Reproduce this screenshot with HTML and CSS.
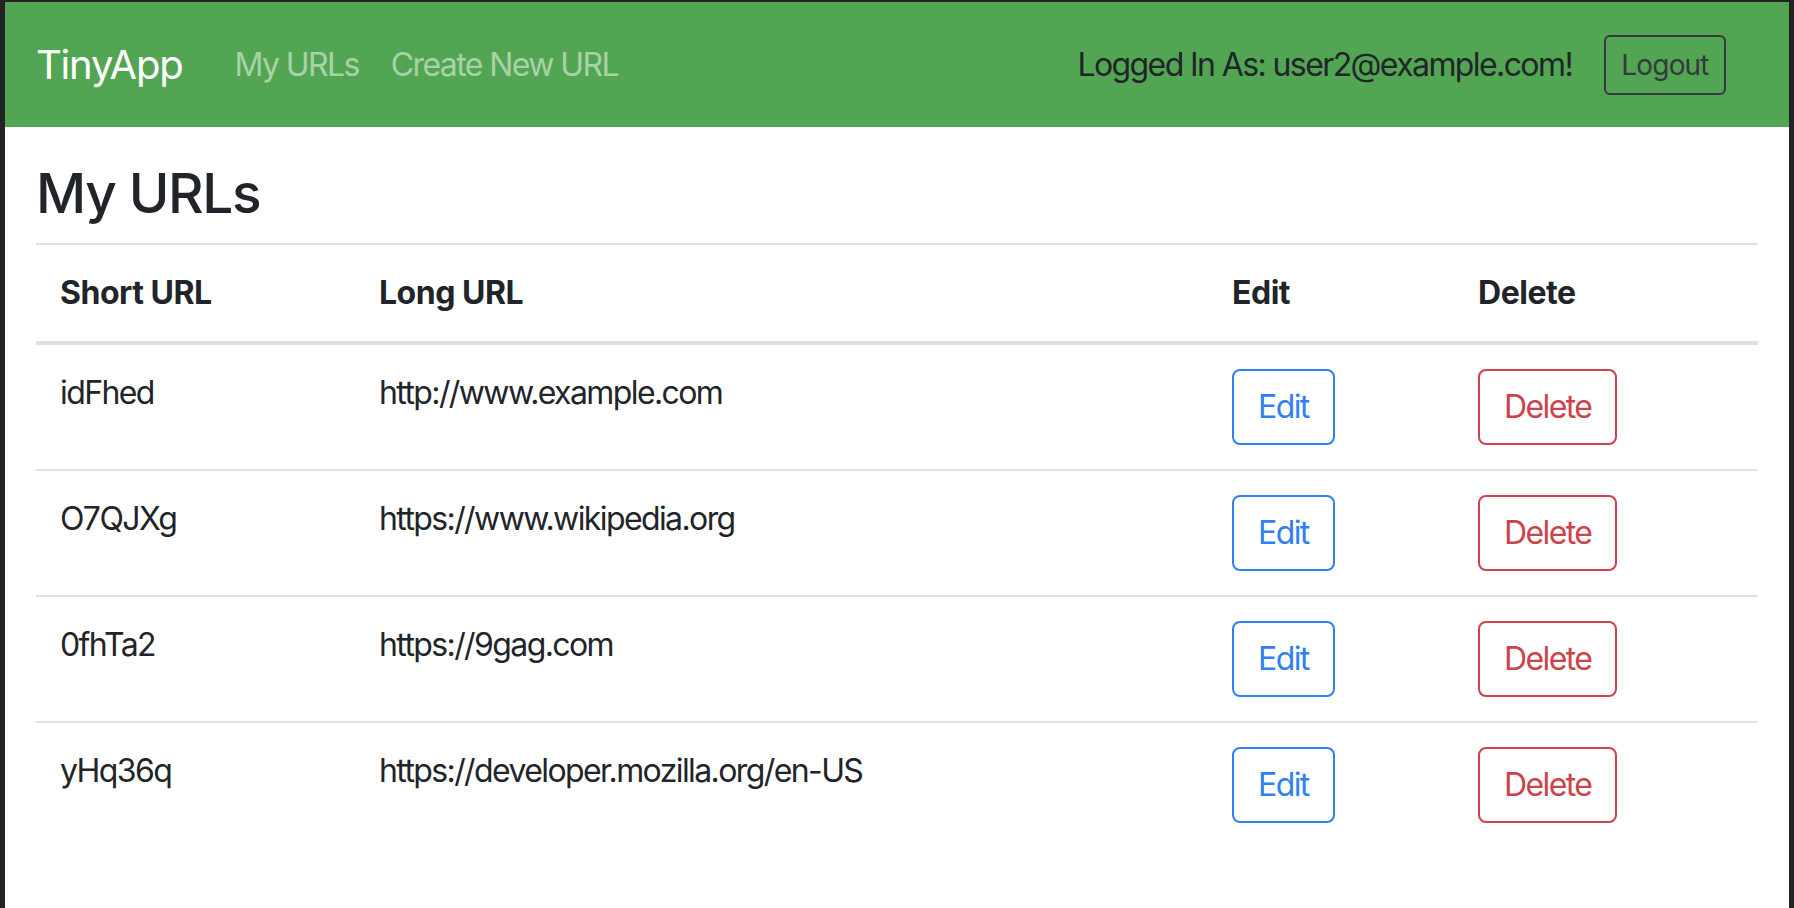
FILE: index.html
```html
<!DOCTYPE html>
<html lang="en">
<head>
<meta charset="utf-8">
<title>TinyApp - My URLs</title>
<link rel="stylesheet" href="styles.css">
</head>
<body>
<div class="window">
  <nav class="navbar">
    <a class="brand" href="#">TinyApp</a>
    <a class="nav-link" href="#">My URLs</a>
    <a class="nav-link" href="#">Create New URL</a>
    <div class="nav-right">
      <span class="nav-text">Logged In As: user2@example.com!</span>
      <button class="btn-logout" type="button">Logout</button>
    </div>
  </nav>
  <main class="content">
    <h1 class="title">My URLs</h1>
    <table class="url-table">
      <colgroup>
        <col class="c-short">
        <col class="c-long">
        <col class="c-edit">
        <col class="c-delete">
      </colgroup>
      <thead>
        <tr><th>Short URL</th><th>Long URL</th><th>Edit</th><th>Delete</th></tr>
      </thead>
      <tbody>
        <tr>
          <td>idFhed</td><td>http://www.example.com</td>
          <td><button class="btn btn-edit" type="button">Edit</button></td>
          <td><button class="btn btn-delete" type="button">Delete</button></td>
        </tr>
        <tr>
          <td>O7QJXg</td><td>https://www.wikipedia.org</td>
          <td><button class="btn btn-edit" type="button">Edit</button></td>
          <td><button class="btn btn-delete" type="button">Delete</button></td>
        </tr>
        <tr>
          <td>0fhTa2</td><td>https://9gag.com</td>
          <td><button class="btn btn-edit" type="button">Edit</button></td>
          <td><button class="btn btn-delete" type="button">Delete</button></td>
        </tr>
        <tr>
          <td>yHq36q</td><td>https://developer.mozilla.org/en-US</td>
          <td><button class="btn btn-edit" type="button">Edit</button></td>
          <td><button class="btn btn-delete" type="button">Delete</button></td>
        </tr>
      </tbody>
    </table>
  </main>
</div>
</body>
</html>
```
FILE: styles.css
```css
html, body {
  margin: 0;
  padding: 0;
  height: 100%;
}
body {
  background: #232323;
  font-family: Inter, "Noto Sans", "Liberation Sans", sans-serif;
  color: #212529;
}
.window {
  margin: 2px 5px 0 5px;
  background: #ffffff;
  min-height: calc(100% - 2px);
}
.navbar {
  height: 125px;
  box-sizing: border-box;
  background: #52a552;
  display: flex;
  align-items: center;
  padding: 0 32px;
}
.brand {
  color: #ffffff;
  font-size: 40px;
  letter-spacing: -0.03em;
  text-decoration: none;
  margin-right: 36px;
  line-height: 60px;
  margin-left: -1px;
}
.nav-link {
  color: rgba(255, 255, 255, 0.5);
  font-size: 32px;
  letter-spacing: -0.05em;
  text-decoration: none;
  padding: 0 16px;
  line-height: 48px;
}
.nav-right {
  margin-left: auto;
  display: flex;
  align-items: center;
  margin-right: 31px;
}
.nav-text {
  font-size: 32px;
  letter-spacing: -0.05em;
  color: #212529;
  line-height: 48px;
}
.btn-logout {
  margin-left: 32px;
  height: 60px;
  width: 122px;
  box-sizing: border-box;
  border: 2px solid #343a40;
  border-radius: 6px;
  background: transparent;
  color: #343a40;
  font-family: inherit;
  font-size: 28px;
  letter-spacing: -0.03em;
  padding: 0;
}
.content {
  padding: 33px 31px 0 31px;
}
.title {
  margin: 0 0 16px 0;
  font-size: 55px;
  font-weight: 500;
  letter-spacing: -0.025em;
  line-height: 67px;
}
.url-table {
  width: 100%;
  table-layout: fixed;
  border-collapse: separate;
  border-spacing: 0;
  font-size: 32px;
  line-height: 48px;
}
.c-short { width: 319px; }
.c-long { width: 853px; }
.c-edit { width: 246px; }
.c-delete { width: 304px; }
.url-table th {
  text-align: left;
  font-weight: 700;
  letter-spacing: -0.015em;
  padding: 24px;
  border-top: 2px solid #dee2e6;
  border-bottom: 4px solid #dee2e6;
  vertical-align: bottom;
}
.url-table td {
  padding: 24px;
  vertical-align: top;
  letter-spacing: -0.05em;
  border-top: 2px solid #dee2e6;
}
.url-table tbody tr:first-child td {
  border-top: none;
}
.btn {
  display: block;
  width: max-content;
  box-sizing: border-box;
  height: 76px;
  padding: 12px 24px;
  border: 2px solid;
  border-radius: 8px;
  background: transparent;
  font-family: inherit;
  font-size: 32px;
  letter-spacing: -0.05em;
  line-height: 48px;
}
.btn-edit {
  color: #2f80f0;
  border-color: #2f80f0;
}
.btn-delete {
  color: #cc434b;
  border-color: #cc434b;
}
```
